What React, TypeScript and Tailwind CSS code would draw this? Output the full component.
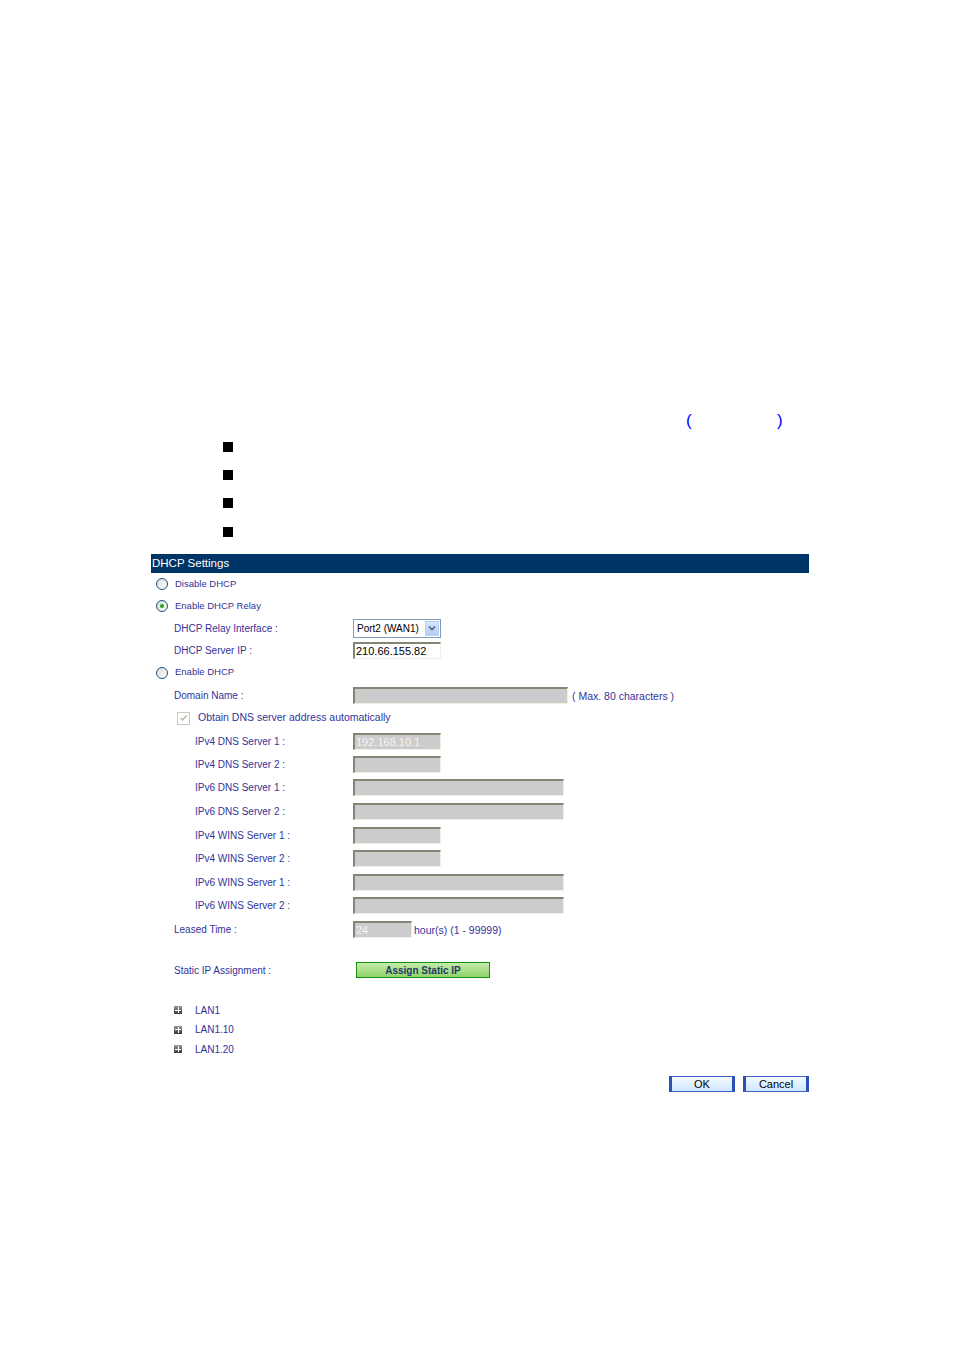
import React from "react";

const font = { fontFamily: '"Liberation Sans", Arial, sans-serif' };

function Radio({ checked }: { checked?: boolean }) {
  return (
    <span className="relative inline-block w-[12px] h-[12px] rounded-full border border-[#1c5180] bg-gradient-to-br from-[#dcdcd6] to-[#ffffff] shrink-0">
      {checked && (
        <span className="absolute left-[3px] top-[3px] w-[4px] h-[4px] rounded-full bg-[#21a121]" />
      )}
    </span>
  );
}

function Box({ w, value, disabled = true }: { w: string; value?: string; disabled?: boolean }) {
  return (
    <div
      className={`${w} h-[17px] border-t-2 border-l-2 border-t-[#848477] border-l-[#848477] border-b border-r border-b-[#f1efe2] border-r-[#f1efe2] ${
        disabled ? "bg-[#cccccc] text-[#f4f4f4]" : "bg-white text-black"
      } text-[11px] leading-[14px] pl-[1px] overflow-hidden whitespace-nowrap`}
    >
      {value}
    </div>
  );
}

function Row({
  h,
  indent,
  label,
  children,
}: {
  h: string;
  indent: "a" | "b";
  label: string;
  children?: React.ReactNode;
}) {
  return (
    <div className={`flex items-center ${h}`}>
      <div className={`${indent === "a" ? "pl-[23px] w-[202px]" : "pl-[44px] w-[202px]"} text-[10px] text-[#333399] whitespace-nowrap`}>
        {label}
      </div>
      <div className="flex items-center">{children}</div>
    </div>
  );
}

function Plus() {
  return (
    <span className="relative inline-block w-[8px] h-[8px] bg-gradient-to-b from-[#9a9a9a] to-[#3a3a3a] shrink-0">
      <span className="absolute left-[1px] top-[3.5px] w-[6px] h-[1px] bg-white" />
      <span className="absolute left-[3.5px] top-[1px] w-[1px] h-[6px] bg-white" />
    </span>
  );
}

function BlueBtn({ label, w }: { label: string; w: string }) {
  return (
    <div
      className={`${w} h-[16px] flex items-center justify-center text-[11px] text-black border-y border-[#3b63c4] border-x-[3px] border-x-[#2a50b8] bg-gradient-to-b from-[#f4faff] to-[#cfe6ff]`}
    >
      {label}
    </div>
  );
}

export default function App() {
  return (
    <div className="w-[954px] h-[1350px] bg-white relative" style={font}>
      {/* top remnant area */}
      <div className="h-[411px]" />
      <div className="h-[20px] relative">
        <span className="absolute left-[686px] top-[0px] text-[17px] leading-[20px] text-[#0000ff]">(</span>
        <span className="absolute left-[777px] top-[0px] text-[17px] leading-[20px] text-[#0000ff]">)</span>
      </div>
      <div className="pl-[223px] flex flex-col">
        <div className="h-[11px]" />
        <div className="w-[10px] h-[10px] bg-black" />
        <div className="h-[18px]" />
        <div className="w-[10px] h-[10px] bg-black" />
        <div className="h-[18px]" />
        <div className="w-[10px] h-[10px] bg-black" />
        <div className="h-[19px]" />
        <div className="w-[10px] h-[10px] bg-black" />
      </div>
      <div className="h-[17px]" />

      {/* DHCP panel */}
      <div className="ml-[151px] w-[658px]">
        <div className="h-[19px] bg-[#003366] text-white text-[11.5px] leading-[19px] pl-[1px]">
          DHCP Settings
        </div>

        <div className="flex items-center h-[22px] pl-[5px] gap-[7px]">
          <Radio />
          <span className="text-[9.5px] text-[#333399]">Disable DHCP</span>
        </div>
        <div className="flex items-center h-[22px] pl-[5px] gap-[7px]">
          <Radio checked />
          <span className="text-[9.5px] text-[#333399]">Enable DHCP Relay</span>
        </div>

        <Row h="h-[22px]" indent="a" label="DHCP Relay Interface :">
          <div className="w-[88px] h-[19px] border border-[#7f9db9] bg-white flex items-center justify-between pl-[3px] pr-[1px]">
            <span className="text-[10px] text-black">Port2 (WAN1)</span>
            <span className="w-[14px] h-[15px] bg-gradient-to-b from-[#d6e6ff] to-[#b4cdf5] border border-[#b9cdf2] flex items-center justify-center">
              <svg width="8" height="6" viewBox="0 0 8 6">
                <path d="M1 1.5 L4 4.5 L7 1.5" stroke="#4d6185" strokeWidth="1.6" fill="none" />
              </svg>
            </span>
          </div>
        </Row>
        <Row h="h-[22px]" indent="a" label="DHCP Server IP :">
          <Box w="w-[88px]" value="210.66.155.82" disabled={false} />
        </Row>

        <div className="flex items-center h-[23px] pl-[5px] gap-[7px]">
          <Radio />
          <span className="text-[9.5px] text-[#333399]">Enable DHCP</span>
        </div>

        <Row h="h-[22px]" indent="a" label="Domain Name :">
          <Box w="w-[215px]" />
          <span className="ml-[4px] mt-[3px] text-[10.5px] text-[#333399]">( Max. 80 characters )</span>
        </Row>

        <div className="flex items-center h-[24px] pl-[26px]">
          <span className="w-[13px] h-[13px] border border-[#cac8bb] bg-white flex items-center justify-center">
            <svg width="9" height="8" viewBox="0 0 9 8">
              <path d="M1.5 4 L3.5 6 L7.5 1.5" stroke="#b8b8aa" strokeWidth="1.5" fill="none" />
            </svg>
          </span>
          <span className="ml-[8px] text-[10.5px] text-[#333399]">Obtain DNS server address automatically</span>
        </div>

        <Row h="h-[22px]" indent="b" label="IPv4 DNS Server 1 :">
          <Box w="w-[88px]" value="192.168.10.1" />
        </Row>
        <Row h="h-[24px]" indent="b" label="IPv4 DNS Server 2 :">
          <Box w="w-[88px]" />
        </Row>
        <Row h="h-[23px]" indent="b" label="IPv6 DNS Server 1 :">
          <Box w="w-[211px]" />
        </Row>
        <Row h="h-[24px]" indent="b" label="IPv6 DNS Server 2 :">
          <Box w="w-[211px]" />
        </Row>
        <Row h="h-[24px]" indent="b" label="IPv4 WINS Server 1 :">
          <Box w="w-[88px]" />
        </Row>
        <Row h="h-[23px]" indent="b" label="IPv4 WINS Server 2 :">
          <Box w="w-[88px]" />
        </Row>
        <Row h="h-[24px]" indent="b" label="IPv6 WINS Server 1 :">
          <Box w="w-[211px]" />
        </Row>
        <Row h="h-[23px]" indent="b" label="IPv6 WINS Server 2 :">
          <Box w="w-[211px]" />
        </Row>
        <Row h="h-[24px]" indent="a" label="Leased Time :">
          <Box w="w-[59px]" value="24" />
          <span className="ml-[2px] text-[10.5px] text-[#333399] mt-[4px]">hour(s) (1 - 99999)</span>
        </Row>

        <div className="h-[18px]" />
        <Row h="h-[22px]" indent="a" label="Static IP Assignment :">
          <div className="ml-[3px] w-[134px] h-[16px] border border-[#119011] bg-gradient-to-b from-[#c6eba8] to-[#8fd36b] flex items-center justify-center text-[10px] font-bold text-[#1f3b66]">
            Assign Static IP
          </div>
        </Row>

        <div className="h-[19px]" />
        {["LAN1", "LAN1.10", "LAN1.20"].map((l, i) => (
          <div key={l} className={`flex items-center ${i === 1 ? "h-[19px]" : "h-[20px]"} pl-[23px]`}>
            <Plus />
            <span className="ml-[13px] text-[10px] text-[#333399]">{l}</span>
          </div>
        ))}

        <div className="h-[17px]" />
        <div className="flex justify-end gap-[8px]">
          <BlueBtn label="OK" w="w-[66px]" />
          <BlueBtn label="Cancel" w="w-[66px]" />
        </div>
      </div>
    </div>
  );
}
